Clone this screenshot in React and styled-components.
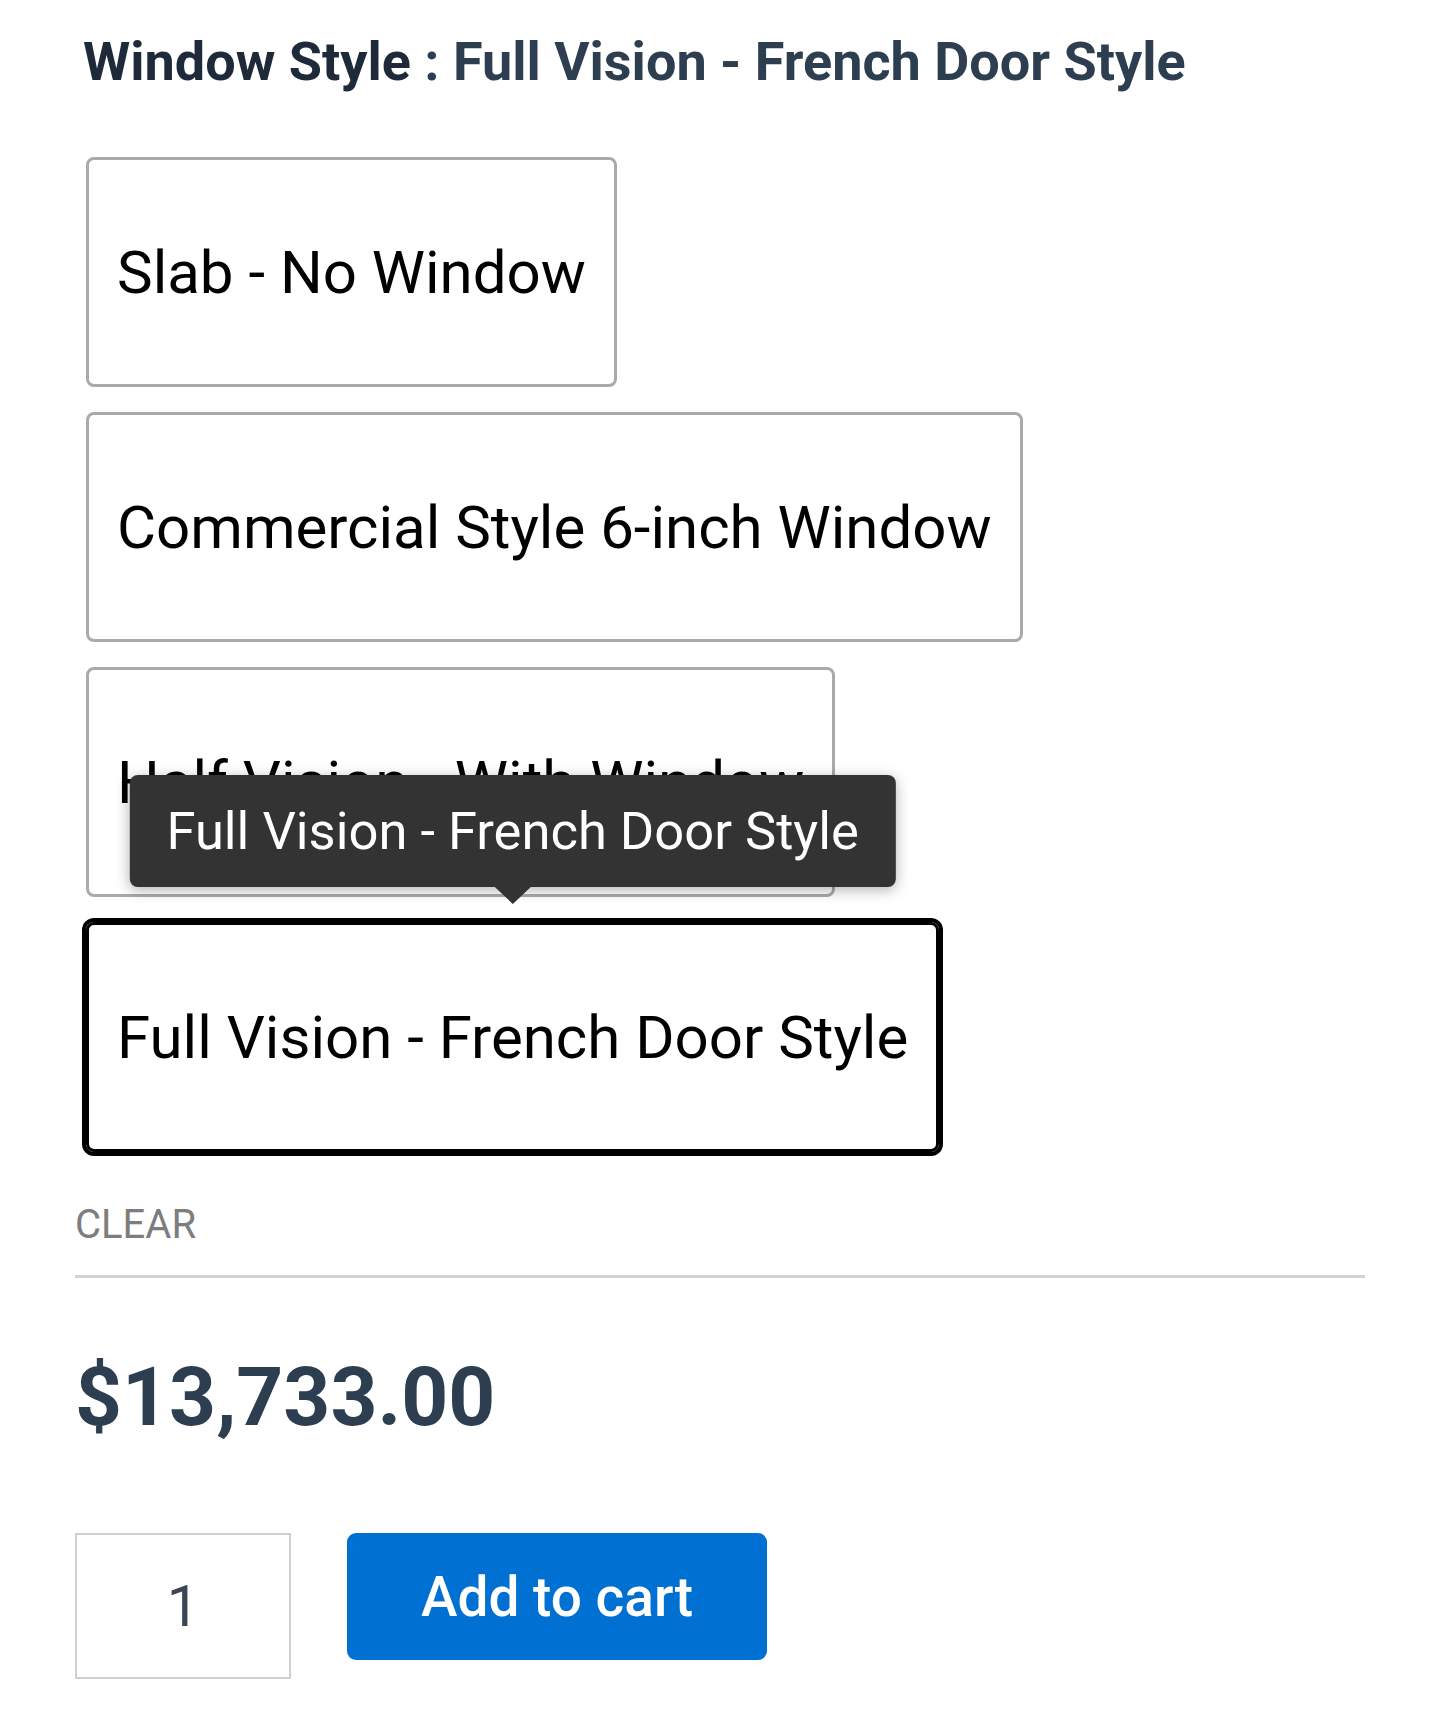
import styled, { createGlobalStyle } from "styled-components";
import { useState } from "react";

const GlobalStyle = createGlobalStyle`
  * {
    box-sizing: border-box;
  }
  body {
    margin: 0;
    background: #fff;
    font-family: Roboto, "Liberation Sans", Arial, sans-serif;
  }
`;

const OPTIONS = [
  "Slab - No Window",
  "Commercial Style 6-inch Window",
  "Half Vision - With Window",
  "Full Vision - French Door Style",
];

const App = () => {
  const [selected, setSelected] = useState(OPTIONS[3]);
  const [qty, setQty] = useState("1");

  return (
    <Page>
      <GlobalStyle />
      <Label>
        Window Style <Value>: {selected || "Choose an option"}</Value>
      </Label>
      <SwatchList>
        {OPTIONS.map((option) => (
          <Swatch
            key={option}
            $selected={option === selected}
            onClick={() => setSelected(option)}
          >
            {option}
            {option === selected && <Tooltip>{option}</Tooltip>}
          </Swatch>
        ))}
      </SwatchList>
      <ClearLink onClick={() => setSelected(null)}>CLEAR</ClearLink>
      <Divider />
      <Price>$13,733.00</Price>
      <CartRow>
        <QtyInput
          type="text"
          inputMode="numeric"
          value={qty}
          onChange={(e) => setQty(e.target.value)}
        />
        <AddButton type="button">Add to cart</AddButton>
      </CartRow>
    </Page>
  );
};

const Page = styled.div`
  width: 1440px;
  padding: 29px 75px 20px 75px;
`;

const Label = styled.h2`
  margin: 0 0 62px 8px;
  font-size: 54px;
  line-height: 66px;
  font-weight: 700;
  color: #1e2a3a;
`;

const Value = styled.span`
  color: #2c3e50;
`;

const SwatchList = styled.div`
  display: flex;
  flex-direction: column;
  align-items: flex-start;
  gap: 25px;
  margin-left: 11px;
`;

const Swatch = styled.div`
  position: relative;
  display: flex;
  align-items: center;
  height: 230px;
  padding: 0 28px;
  border: 3px solid ${({ $selected }) => ($selected ? "#000" : "#aaa")};
  border-radius: 8px;
  box-shadow: ${({ $selected }) => ($selected ? "0 0 0 4px #000" : "none")};
  font-size: 60px;
  color: #000;
  white-space: nowrap;
  cursor: pointer;
`;

const Tooltip = styled.span`
  position: absolute;
  bottom: calc(100% + 38px);
  left: 50%;
  transform: translateX(-50%);
  display: flex;
  align-items: center;
  height: 112px;
  padding: 0 37px;
  background: #333;
  color: #fff;
  font-size: 52.5px;
  border-radius: 8px;
  box-shadow: 0 3px 14px rgba(0, 0, 0, 0.3);
  z-index: 2;

  &::after {
    content: "";
    position: absolute;
    top: 100%;
    left: 50%;
    transform: translateX(-50%);
    border-left: 18px solid transparent;
    border-right: 18px solid transparent;
    border-top: 17px solid #333;
  }
`;

const ClearLink = styled.a`
  display: block;
  margin-top: 49px;
  font-size: 40px;
  line-height: 48px;
  color: #7d7d7d;
  cursor: pointer;
`;

const Divider = styled.hr`
  margin: 26px 0 0;
  border: 0;
  height: 3px;
  background: #d2d2d2;
`;

const Price = styled.p`
  margin: 70px 0 0;
  font-size: 82px;
  line-height: 98px;
  font-weight: 700;
  color: #2c3e50;
`;

const CartRow = styled.div`
  display: flex;
  align-items: flex-start;
  gap: 56px;
  margin-top: 87px;
`;

const QtyInput = styled.input`
  width: 216px;
  height: 146px;
  border: 2px solid #cfcfcf;
  background: #fff;
  font-family: Roboto, "Liberation Sans", Arial, sans-serif;
  font-size: 58px;
  color: #3b4655;
  text-align: center;
  outline: none;
`;

const AddButton = styled.button`
  width: 420px;
  height: 127px;
  border: 0;
  border-radius: 9px;
  background: #0070d3;
  color: #fff;
  font-family: Roboto, "Liberation Sans", Arial, sans-serif;
  font-size: 55px;
  font-weight: 500;
  cursor: pointer;
`;

export default App;
